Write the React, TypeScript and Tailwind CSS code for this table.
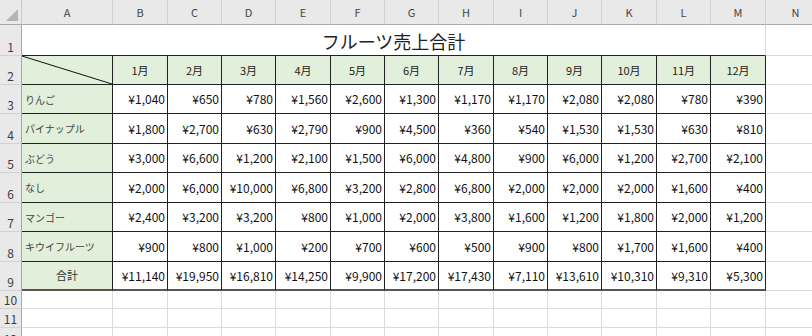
import { Fragment } from "react";

const cols = ["A", "B", "C", "D", "E", "F", "G", "H", "I", "J", "K", "L", "M", "N"];
const months = ["1月", "2月", "3月", "4月", "5月", "6月", "7月", "8月", "9月", "10月", "11月", "12月"];

const rows: { label: string; values: string[] }[] = [
  { label: "りんご", values: ["¥1,040", "¥650", "¥780", "¥1,560", "¥2,600", "¥1,300", "¥1,170", "¥1,170", "¥2,080", "¥2,080", "¥780", "¥390"] },
  { label: "パイナップル", values: ["¥1,800", "¥2,700", "¥630", "¥2,790", "¥900", "¥4,500", "¥360", "¥540", "¥1,530", "¥1,530", "¥630", "¥810"] },
  { label: "ぶどう", values: ["¥3,000", "¥6,600", "¥1,200", "¥2,100", "¥1,500", "¥6,000", "¥4,800", "¥900", "¥6,000", "¥1,200", "¥2,700", "¥2,100"] },
  { label: "なし", values: ["¥2,000", "¥6,000", "¥10,000", "¥6,800", "¥3,200", "¥2,800", "¥6,800", "¥2,000", "¥2,000", "¥2,000", "¥1,600", "¥400"] },
  { label: "マンゴー", values: ["¥2,400", "¥3,200", "¥3,200", "¥800", "¥1,000", "¥2,000", "¥3,800", "¥1,600", "¥1,200", "¥1,800", "¥2,000", "¥1,200"] },
  { label: "キウイフルーツ", values: ["¥900", "¥800", "¥1,000", "¥200", "¥700", "¥600", "¥500", "¥900", "¥800", "¥1,700", "¥1,600", "¥400"] },
];

const totals = ["¥11,140", "¥19,950", "¥16,810", "¥14,250", "¥9,900", "¥17,200", "¥17,430", "¥7,110", "¥13,610", "¥10,310", "¥9,310", "¥5,300"];

// row number cell on the left edge
function RowNum({ n }: { n: number }) {
  return (
    <div className="flex items-end justify-center pb-[2px] bg-[#e9e9e9] border-r border-b border-r-[#a8a8a8] border-b-[#d2d2d2] text-[12px] leading-none text-[#3c3c3c]">
      {n}
    </div>
  );
}

function Blank() {
  return <div className="border-r border-b border-[#dadada] bg-white" />;
}

export default function App() {
  return (
    <div
      className="w-[812px] h-[336px] overflow-hidden bg-white"
      style={{ fontFamily: '"Noto Sans CJK JP", "Noto Sans", sans-serif' }}
    >
      <div className="grid grid-cols-[22px_91px_55px_54px_54px_55px_54px_54px_55px_54px_54px_55px_54px_55px_60px] grid-rows-[25px_31px_29px_29px_30px_29px_30px_29px_30px_29px_18px_19px_20px]">
        {/* column headers */}
        <div className="relative bg-[#e9e9e9] border-r border-b border-r-[#c8c8c8] border-b-[#a8a8a8]">
          <div className="absolute right-[3px] bottom-[3px] w-0 h-0 border-l-[12px] border-l-transparent border-b-[12px] border-b-[#b4b4b4]" />
        </div>
        {cols.map((c) => (
          <div
            key={c}
            className="flex items-center justify-center bg-[#e9e9e9] border-r border-b border-r-[#d0d0d0] border-b-[#a8a8a8] text-[11px] text-[#444]"
          >
            {c}
          </div>
        ))}

        {/* row 1: merged title */}
        <RowNum n={1} />
        <div className="col-[2/15] flex items-center justify-center border-b border-r border-b-[#222] border-r-[#dadada] text-[18px] leading-none pt-[2px] text-[#222]">
          フルーツ売上合計
        </div>
        <Blank />

        {/* row 2: month headers */}
        <RowNum n={2} />
        <div className="relative bg-[#e2efda] border-r border-b border-[#222]">
          <svg className="absolute inset-0" width="90" height="28" viewBox="0 0 90 28">
            <line x1="0" y1="0" x2="90" y2="28" stroke="#111" strokeWidth="1" />
          </svg>
        </div>
        {months.map((m) => (
          <div
            key={m}
            className="flex items-center justify-center bg-[#e2efda] border-r border-b border-[#222] text-[11px] text-[#222]"
          >
            {m}
          </div>
        ))}
        <Blank />

        {/* fruit rows */}
        {rows.map((r, i) => (
          <Fragment key={r.label}>
            <RowNum n={i + 3} />
            <div className="flex items-center pl-[3px] bg-[#e2efda] border-r border-b border-[#222] text-[10px] text-[#444]">
              {r.label}
            </div>
            {r.values.map((v, j) => (
              <div
                key={j}
                className="flex items-center justify-end pr-[2px] border-r border-b border-[#222] text-[12px] text-[#111]"
              >
                {v}
              </div>
            ))}
            <Blank />
          </Fragment>
        ))}

        {/* totals */}
        <RowNum n={9} />
        <div className="flex items-center justify-center bg-[#e2efda] border-r border-b-2 border-r-[#222] border-b-[#555] text-[11px] text-[#333]">
          合計
        </div>
        {totals.map((v, j) => (
          <div
            key={j}
            className="flex items-center justify-end pr-[2px] border-r border-b-2 border-r-[#222] border-b-[#555] text-[12px] text-[#111]"
          >
            {v}
          </div>
        ))}
        <Blank />

        {/* empty rows */}
        {[10, 11, 12].map((n) => (
          <Fragment key={n}>
            <RowNum n={n} />
            {cols.map((c) => (
              <Blank key={c} />
            ))}
          </Fragment>
        ))}
      </div>
    </div>
  );
}
